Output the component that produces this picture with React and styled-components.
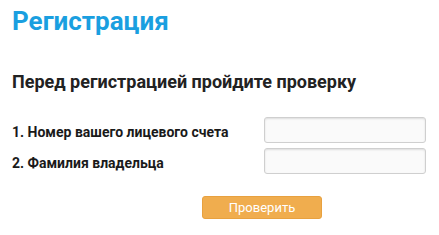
import styled, { createGlobalStyle } from 'styled-components';

const GlobalStyle = createGlobalStyle`
  html, body {
    margin: 0;
    padding: 0;
    background: #ffffff;
    font-family: Roboto, "Liberation Sans", sans-serif;
  }
`;

const fields = [
  { id: 'account', label: '1. Номер вашего лицевого счета' },
  { id: 'owner', label: '2. Фамилия владельца' },
];

const App = () => {
  return (
    <St.Page>
      <GlobalStyle />
      <St.Title>Регистрация</St.Title>
      <St.Subtitle>Перед регистрацией пройдите проверку</St.Subtitle>
      <St.Form>
        {fields.map(field => (
          <St.Row key={field.id}>
            <St.Label htmlFor={field.id}>{field.label}</St.Label>
            <St.Input id={field.id} type="text" />
          </St.Row>
        ))}
        <St.Actions>
          <St.Button type="button">Проверить</St.Button>
        </St.Actions>
      </St.Form>
    </St.Page>
  );
};

const St = {
  Page: styled.div`
    display: flex;
    flex-direction: column;

    width: 439px;
    padding: 6px 12px 0;
    box-sizing: border-box;
  `,
  Title: styled.h1`
    margin: 0;

    font-size: 26px;
    font-weight: 700;
    line-height: 30px;
    color: #1a9fe0;
  `,
  Subtitle: styled.h2`
    margin: 35px 0 0;

    font-size: 18px;
    font-weight: 700;
    line-height: 22px;
    color: #222222;
  `,
  Form: styled.form`
    display: flex;
    flex-direction: column;
    gap: 5px;

    margin-top: 24px;
  `,
  Row: styled.div`
    display: flex;
    align-items: center;
    justify-content: space-between;

    width: 414px;
  `,
  Label: styled.label`
    padding-top: 4px;

    font-size: 14px;
    font-weight: 700;
    color: #1a1a1a;
  `,
  Input: styled.input`
    width: 162px;
    height: 26px;
    box-sizing: border-box;
    padding: 0 6px;
    border: 1px solid #cfcfcf;
    border-radius: 3px;

    background: #fafafa;
    box-shadow: inset 0 1px 2px rgba(0, 0, 0, 0.12);
    outline: none;
  `,
  Actions: styled.div`
    display: flex;

    padding-left: 190px;
    margin-top: 17px;
  `,
  Button: styled.button`
    width: 120px;
    height: 23px;
    border: 1px solid #e8a13f;
    border-radius: 3px;

    background: #f0ad4e;
    color: #ffffff;
    font-family: Roboto, "Liberation Sans", sans-serif;
    font-size: 13px;

    cursor: pointer;
  `,
};

export default App;
